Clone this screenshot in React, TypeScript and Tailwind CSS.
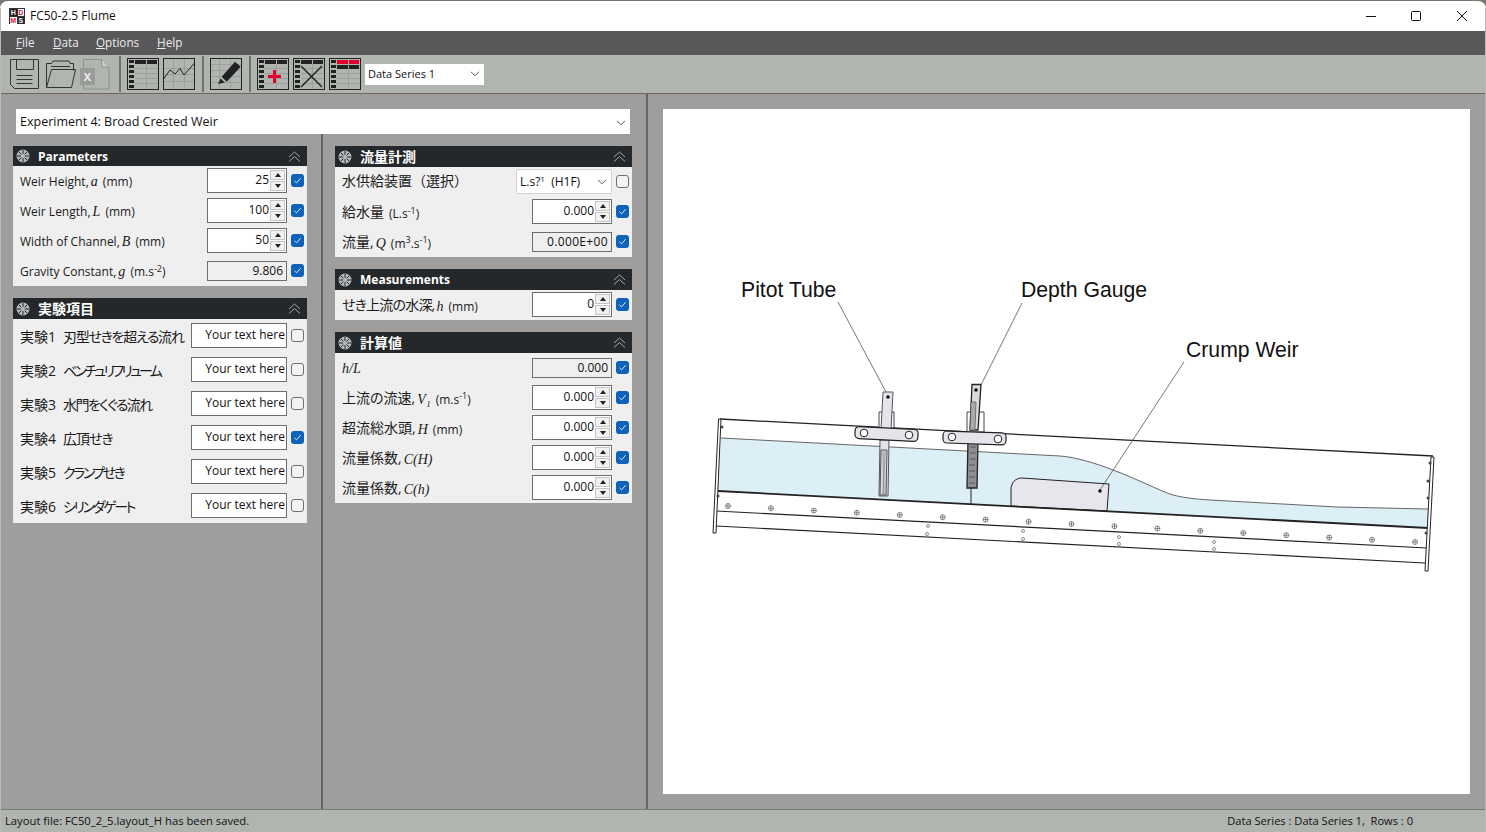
import type { ReactNode } from "react";

const UI = "font-['Open_Sans','Noto_Sans_CJK_JP',sans-serif]";

function Sym({ children }: { children: ReactNode }) {
  return <i className="mx-[2px] font-['Liberation_Serif',serif] text-[14px]">{children}</i>;
}

function Check({ on }: { on?: boolean }) {
  if (!on) {
    return <span className="h-[13px] w-[13px] shrink-0 rounded-[3px] border border-[#6f6f6f] bg-[#f3f3f3]" />;
  }
  return (
    <span className="flex h-[13px] w-[13px] shrink-0 items-center justify-center rounded-[3px] bg-[#0f62b9]">
      <svg width="9" height="9" viewBox="0 0 9 9" fill="none" stroke="#dfeaf6" strokeWidth="1">
        <path d="M1.5 4.8 3.6 6.8 7.6 2.2" />
      </svg>
    </span>
  );
}

function SpinBtns() {
  return (
    <span className="absolute right-[1px] top-[1px] flex h-[21px] w-[15px] flex-col gap-[1px]">
      <span className="flex h-[10px] items-center justify-center border border-[#c4c4c4] bg-[#f1f1f1]">
        <span className="h-0 w-0 border-x-[3px] border-b-[4px] border-x-transparent border-b-[#222]" />
      </span>
      <span className="flex h-[10px] items-center justify-center border border-[#c4c4c4] bg-[#f1f1f1]">
        <span className="h-0 w-0 border-x-[3px] border-t-[4px] border-x-transparent border-t-[#222]" />
      </span>
    </span>
  );
}

function Spin({ value }: { value: string }) {
  return (
    <div className="relative h-[25px] w-[80px] shrink-0 border border-[#6e6e6e] bg-white pr-[17px] text-right text-[12px] leading-[22px] text-[#111]">
      {value}
      <SpinBtns />
    </div>
  );
}

function ReadOnly({ value, wide }: { value: string; wide?: boolean }) {
  return (
    <div className={`h-[20px] w-[80px] shrink-0 border border-[#6e6e6e] bg-[#efefef] pr-[3px] text-right text-[12px] leading-[18px] text-[#111] ${wide ? "tracking-[0.35px]" : ""}`}>
      {value}
    </div>
  );
}

function SnowIcon() {
  return (
    <svg width="14" height="14" viewBox="0 0 14 14" className="shrink-0">
      <circle cx="7" cy="7" r="6.5" fill="#b5b7b8" />
      <g stroke="#24282b" strokeWidth="1">
        <path d="M7 1v12M1 7h12M2.8 2.8l8.4 8.4M11.2 2.8l-8.4 8.4" />
      </g>
      <circle cx="7" cy="7" r="2.2" fill="#b5b7b8" />
    </svg>
  );
}

function PanelHeader({ title, cjk, h }: { title: string; cjk?: boolean; h: string }) {
  return (
    <div className={`flex items-center bg-[#24282b] pl-[3px] pr-[6px] text-white ${h}`}>
      <SnowIcon />
      <span className={`ml-[8px] font-bold ${cjk ? "text-[14px]" : "pt-[1px] text-[12px]"}`}>{title}</span>
      <svg width="13" height="11" viewBox="0 0 13 11" fill="none" stroke="#a9abac" strokeWidth="1" className="ml-auto">
        <path d="M1 6 6.5 1 12 6M1 10.5 6.5 5.5 12 10.5" />
      </svg>
    </div>
  );
}

function Row({ label, control, on, h = "h-[30px]" }: { label: ReactNode; control: ReactNode; on?: boolean; h?: string }) {
  return (
    <div className={`flex items-center pb-[1px] pl-[7px] pr-[3px] ${h}`}>
      <div className="min-w-0 flex-1 whitespace-nowrap pt-[2px] text-[12px] text-[#1a1a1a]">{label}</div>
      {control}
      <span className="ml-[4px] flex">
        <Check on={on} />
      </span>
    </div>
  );
}

function Ja({ children, className = "top-[-1px] [font-feature-settings:'palt']" }: { children: ReactNode; className?: string }) {
  return <span className={`relative text-[14px] ${className}`}>{children}</span>;
}

function TextBox() {
  return (
    <div className="h-[25px] w-[96px] shrink-0 border border-[#6e6e6e] bg-white pr-[1px] text-right text-[12px] leading-[22px] text-[#111]">
      Your text here
    </div>
  );
}

function TableBase({ header = "#222", children, top }: { header?: string; children?: ReactNode; top?: ReactNode }) {
  return (
    <svg width="32" height="32" viewBox="0 0 32 32" className="block shrink-0">
      <rect x="0.5" y="0.5" width="31" height="31" fill="#b0b5b0" stroke="#222" />
      <g stroke="#969a96" strokeWidth="0.8">
        <path d="M8 10.5h23M8 15.5h23M8 20.5h23M8 25.5h23M19.5 6v25" />
      </g>
      <g fill="#222">
        <rect x="2" y="2" width="5" height="3" />
        <rect x="2" y="7" width="5" height="3" />
        <rect x="2" y="12" width="5" height="3" />
        <rect x="2" y="17" width="5" height="3" />
        <rect x="2" y="22" width="5" height="3" />
        <rect x="2" y="27" width="5" height="3" />
      </g>
      <rect x="8" y="2" width="11" height="4" fill={header} />
      <rect x="20" y="2" width="10" height="4" fill={header} />
      {top}
      {children}
    </svg>
  );
}

function Sep() {
  return <span className="block h-[36px] w-[2px] shrink-0 bg-[#6f716f]" />;
}

function Toolbar() {
  return (
    <div className="flex h-[39px] items-center border-b border-[#666] bg-[#b0b5b0] pl-[10px]">
      <svg width="30" height="30" viewBox="0 0 30 30" fill="none" stroke="#333" strokeWidth="1" className="block shrink-0">
        <path d="M.5 .5h28v29H4.500l-4-4z" />
        <path d="M6.500 .5v10h17V.5M6.500 16.500h16M6.500 20.500h16M6.500 24.500h16" />
      </svg>
      <svg width="32" height="30" viewBox="0 0 32 30" fill="none" stroke="#333" strokeWidth="1" className="ml-[5px] block shrink-0">
        <path d="M1.500 28.500V4.500h5l1.500-2.500h16l1 2.500h3.500v7" />
        <path d="M1.500 28.500h25l4-18H6.500L1.500 28.500z" />
        <path d="M6 7.500h19" />
      </svg>
      <svg width="30" height="31" viewBox="0 0 30 31" className="ml-[3px] block shrink-0">
        <path d="M3.500 .5h18l7.500 7.500v22H3.500z" fill="none" stroke="#8c908c" />
        <path d="M21.500 .5V8H29" fill="#c9ccc9" stroke="#8c908c" />
        <rect x="0" y="9" width="15" height="17" fill="#999c99" />
        <text x="7.500" y="22" textAnchor="middle" fontSize="14" fontWeight="700" fill="#e8e8e8" fontFamily="Liberation Sans">x</text>
      </svg>
      <span className="ml-[9px] flex"><Sep /></span>
      <span className="ml-[6px] flex"><TableBase /></span>
      <span className="ml-[4px] flex">
        <svg width="32" height="32" viewBox="0 0 32 32" fill="none" className="block shrink-0">
          <rect x="0.500" y="0.500" width="31" height="31" stroke="#222" />
          <path d="M1 10.500h30M1 16.500h30M1 23.500h30M10.500 1v30M21.500 1v30" stroke="#969a96" strokeWidth="0.8" />
          <path d="M.5 21 7 12l5 4 5-5.500 4 6.500L31.300 5.300" stroke="#222" strokeWidth="1" />
        </svg>
      </span>
      <span className="ml-[7px] flex"><Sep /></span>
      <span className="ml-[6px] flex">
        <svg width="32" height="32" viewBox="0 0 32 32" fill="none" className="block shrink-0">
          <rect x="0.500" y="0.500" width="31" height="31" stroke="#222" />
          <path d="M1 6.500h30M1 12.500h30M1 18.500h30M1 24.500h30M9.500 1v30M20.500 1v30" stroke="#969a96" strokeWidth="0.8" />
          <path d="M11.700 18.700 16.700 23.700 30.700 8.700 25 3.700z" fill="#222" />
          <path d="M10.700 20.500 14.800 24.500 8 26z" fill="#222" />
        </svg>
      </span>
      <span className="ml-[7px] flex"><Sep /></span>
      <span className="ml-[6px] flex">
        <TableBase>
          <path d="M11 18.500h13M17.500 12v13" stroke="#e4002b" strokeWidth="3" />
        </TableBase>
      </span>
      <span className="ml-[4px] flex">
        <TableBase>
          <path d="M8 8 29 29M29 8 8 29" stroke="#222" strokeWidth="1.500" />
        </TableBase>
      </span>
      <span className="ml-[4px] flex">
        <TableBase
          header="#e4002b"
          top={
            <>
              <rect x="8" y="7" width="11" height="4" fill="#222" />
              <rect x="20" y="7" width="10" height="4" fill="#222" />
            </>
          }
        />
      </span>
      <div className="ml-[4px] flex h-[21px] w-[119px] items-center justify-between bg-white pl-[3px] pr-[4px] text-[11px] text-[#111]">
        Data Series 1
        <Chevron />
      </div>
    </div>
  );
}

function Chevron() {
  return (
    <svg width="10" height="6" viewBox="0 0 10 6" fill="none" stroke="#555" strokeWidth="1">
      <path d="M1 .8 5 4.800 9 .8" />
    </svg>
  );
}

function FlumeDrawing() {
  const bolts = Array.from({ length: 17 }, (_, i) => ({ x: 728 + i * 42.94, y: 506 + i * 2.25 }));
  const holes = [
    [928, 526], [927, 534], [1023, 531], [1023, 539], [1119, 537], [1119, 544], [1214, 542], [1214, 549],
  ];
  const studs = [
    [1430, 463], [1428, 481], [1428, 498], [1426, 533], [722, 427], [718, 496],
  ];
  return (
    <svg viewBox="663 109 807 685" width="807" height="685" className="block">
      <path
        d="M721 438 L1060 456 C1075 457 1095 463 1113 470 C1135 478 1160 491 1173 495 C1185 498 1195 499 1210 500 L1337 507 L1428 509 L1428 528 L718 491 Z"
        fill="#dceef6"
      />
      <path d="M721 438 L1060 456 C1075 457 1095 463 1113 470 C1135 478 1160 491 1173 495 C1185 498 1195 499 1210 500 L1337 507 L1428 509" fill="none" stroke="#666" strokeWidth="1" />
      <path d="M1011 506 V490 C1011 483 1015 478 1022 478 L1109 484 L1107 511 Z" fill="#e6e6ec" stroke="#222" strokeWidth="1" />
      <g fill="none" stroke="#222">
        <path d="M720 419 L1433 456" strokeWidth="1.300" />
        <path d="M718 491 L1428 528" strokeWidth="1.800" />
        <path d="M716 511 L1427 548" strokeWidth="1.200" />
        <path d="M716 526 L1425 563" strokeWidth="1.200" />
        <path d="M718.500 419 L713 533 L716 533 L721 419 Z" fill="#fff" strokeWidth="1" />
        <path d="M1431 457 L1425 571 L1428 571 L1434 457 Z" fill="#fff" strokeWidth="1" />
      </g>
      {studs.map(([x, y]) => (
        <circle key={`${x}-${y}`} cx={x} cy={y} r="1.500" fill="#444" />
      ))}
      {bolts.map((b) => (
        <g key={b.x} stroke="#444" strokeWidth="0.6" fill="none">
          <circle cx={b.x} cy={b.y} r="2.500" />
          <path d={`M${b.x - 2.5} ${b.y}h5M${b.x} ${b.y - 2.5}v5`} />
        </g>
      ))}
      {holes.map(([x, y]) => (
        <circle key={`${x}-${y}`} cx={x} cy={y} r="1.500" fill="#fff" stroke="#444" strokeWidth="0.6" />
      ))}
      <g>
        <path d="M879 412 h15 v16 h-15z" fill="#fff" stroke="#444" />
        <path d="M883 392 L893 392 L891 430 L881 430 Z" fill="#e4e4ea" stroke="#555" />
        <circle cx="888" cy="397" r="1.800" fill="#111" />
        <path d="M880 440 h9 l-1 56 h-9z" fill="#e4e4ea" stroke="#555" />
        <path d="M881 450 h6 l-1 45 h-6z" fill="#d4d4da" stroke="#555" />
        <path d="M883 451 l1 44M885 451 l-2 44" stroke="#666" strokeWidth="0.5" />
        <rect x="855" y="428" width="63" height="12" rx="4" transform="rotate(3 887 434)" fill="#e4e4ea" stroke="#222" strokeWidth="1.200" />
        <circle cx="864" cy="433" r="3.800" fill="#fff" stroke="#222" />
        <circle cx="909" cy="435" r="3.800" fill="#fff" stroke="#222" />
      </g>
      <g>
        <path d="M967 412 h17 v20 h-17z" fill="#fff" stroke="#444" />
        <path d="M972 384.500 h9 L978 430 H970 Z" fill="#d9d9df" stroke="#222" strokeWidth="1.300" />
        <circle cx="976" cy="390" r="1.800" fill="#111" />
        <path d="M971 402 h5 l-1 28 h-5z" fill="#aaa" stroke="#444" strokeWidth="0.6" />
        <path d="M968 440 h10 l-1 48 h-10z" fill="#8f8f93" stroke="#222" strokeWidth="1.300" />
        <path d="M970 447h6M970 453h6M970 459h6M969 465h6M969 471h6M969 477h6M969 483h6" stroke="#333" strokeWidth="0.6" />
        <path d="M971 488 V505" stroke="#222" />
        <rect x="943" y="432" width="63" height="12" rx="4" transform="rotate(2 975 438)" fill="#e4e4ea" stroke="#222" strokeWidth="1.200" />
        <circle cx="952" cy="437" r="3.800" fill="#fff" stroke="#222" />
        <circle cx="998" cy="439" r="3.800" fill="#fff" stroke="#222" />
      </g>
      <g stroke="#555" strokeWidth="0.8" fill="none">
        <path d="M838 302 L886 392" />
        <path d="M1022 303 L981 385" />
        <path d="M1184 362 L1100 490" />
      </g>
      <circle cx="1100" cy="491" r="1.800" fill="#111" />
      <g fontFamily="Liberation Sans, sans-serif" fontSize="21.200" fill="#111">
        <text x="741" y="297">Pitot Tube</text>
        <text x="1021" y="297">Depth Gauge</text>
        <text x="1186" y="356.500">Crump Weir</text>
      </g>
    </svg>
  );
}

// tracking per row: the reference's kana run much narrower than Noto's
const experiments = [
  ["実験1", "刃型せきを超える流れ", false, "tracking-[-1.3px]"],
  ["実験2", "ベンチュリフリューム", false, "tracking-[-2.7px]"],
  ["実験3", "水門をくぐる流れ", false, "tracking-[-1.6px]"],
  ["実験4", "広頂せき", true, "tracking-[-1px]"],
  ["実験5", "クランプせき", false, "tracking-[-2.5px]"],
  ["実験6", "シリンダゲート", false, "tracking-[-2.4px]"],
] as const;

export default function App() {
  return (
    <div className={`relative h-[832px] w-[1486px] overflow-hidden bg-[#77766f] pt-[1px] ${UI}`}>
      <div className="flex h-[831px] flex-col overflow-hidden rounded-t-[8px] bg-[#a09e9c]">
        {/* title bar */}
        <div className="flex h-[30px] shrink-0 items-center bg-white pl-[9px]">
          <div className="grid h-[16px] w-[16px] grid-cols-2 gap-[1px] bg-[#333] p-[1px] text-center font-['Liberation_Sans',sans-serif] text-[7px] font-bold leading-[7px]">
            <span className="bg-[#222] text-white">H</span>
            <span className="bg-white text-[#d8113a]">D</span>
            <span className="bg-white text-[#d8113a]">M</span>
            <span className="bg-[#222] text-white">S</span>
          </div>
          <span className="ml-[5px] text-[12px] text-[#111]">FC50-2.5 Flume</span>
          <div className="ml-auto flex items-center pr-[18px]">
            <svg width="12" height="12" viewBox="0 0 12 12" stroke="#111" fill="none">
              <path d="M1 6.500h10" />
            </svg>
            <svg width="12" height="12" viewBox="0 0 12 12" stroke="#111" fill="none" className="ml-[33px]">
              <rect x="1.500" y="1.500" width="9" height="9" rx="1" />
            </svg>
            <svg width="12" height="12" viewBox="0 0 12 12" stroke="#111" fill="none" className="ml-[34px]">
              <path d="M1 1 11 11M11 1 1 11" />
            </svg>
          </div>
        </div>
        {/* menu */}
        <div className="flex h-[24px] shrink-0 items-center bg-[#58585a] pl-[16px] text-[11.700px] text-[#ececec]">
          <span className="w-[37px]"><u>F</u>ile</span>
          <span className="w-[43px]"><u>D</u>ata</span>
          <span className="w-[61px]"><u>O</u>ptions</span>
          <span><u>H</u>elp</span>
        </div>
        <Toolbar />
        {/* main */}
        <div className="flex min-h-0 flex-1">
          <div className="flex w-[646px] shrink-0 flex-col pt-[15px]">
            <div className="mx-[16px] flex h-[25px] shrink-0 items-center justify-between bg-white pl-[4px] pr-[4px] pt-[2px] text-[12.500px] text-[#111]">
              Experiment 4: Broad Crested Weir
              <Chevron />
            </div>
            <div className="flex min-h-0 flex-1">
              <div className="w-[321px] shrink-0 pl-[13px] pr-[14px] pt-[12px]">
                <section>
                  <PanelHeader title="Parameters" h="h-[20px]" />
                  <div className="bg-[#efefef]">
                    <Row label={<>Weir Height,<Sym>a</Sym> (mm)</>} on control={<Spin value="25" />} />
                    <Row label={<>Weir Length,<Sym>L</Sym> (mm)</>} on control={<Spin value="100" />} />
                    <Row label={<>Width of Channel,<Sym>B</Sym> (mm)</>} on control={<Spin value="50" />} />
                    <Row label={<>Gravity Constant,<Sym>g</Sym> (m.s<sup>-2</sup>)</>} on control={<ReadOnly value="9.806" />} />
                  </div>
                </section>
                <section className="mt-[12px]">
                  <PanelHeader title="実験項目" cjk h="h-[21px]" />
                  <div className="bg-[#efefef]">
                    {experiments.map(([no, name, on, track]) => (
                      <Row
                        key={no}
                        h="h-[34px]"
                        on={on}
                        label={
                          <Ja className="top-0 [font-feature-settings:'palt']">
                            {no}
                            <span className={`ml-[7px] ${track}`}>{name}</span>
                          </Ja>
                        }
                        control={<TextBox />}
                      />
                    ))}
                  </div>
                </section>
              </div>
              <div className="w-[2px] shrink-0 bg-[#666]" />
              <div className="flex-1 pl-[12px] pr-[14px] pt-[12px]">
                <section>
                  <PanelHeader title="流量計測" cjk h="h-[21px]" />
                  <div className="bg-[#efefef]">
                    <Row
                      label={<Ja className="top-[-2px]">水供給装置（選択）</Ja>}
                      control={
                        <div className="flex h-[25px] w-[96px] shrink-0 items-center justify-between rounded-[2px] border border-[#d0d0d0] bg-white pl-[3px] pr-[4px] pt-[1px] text-[12px] text-[#111]">
                          <span>L.s?<sup className="text-[8px]">1</sup>&nbsp; (H1F)</span>
                          <Chevron />
                        </div>
                      }
                    />
                    <Row label={<><Ja>給水量</Ja><span className="ml-[5px]">(L.s<sup>-1</sup>)</span></>} on control={<Spin value="0.000" />} />
                    <Row label={<><Ja>流量,</Ja><Sym>Q</Sym> (m<sup>3</sup>.s<sup>-1</sup>)</>} on control={<ReadOnly value="0.000E+00" wide />} />
                  </div>
                </section>
                <section className="mt-[12px]">
                  <PanelHeader title="Measurements" h="h-[21px]" />
                  <div className="bg-[#efefef]">
                    <Row label={<><Ja className="top-[-1px] tracking-[-0.8px] [font-feature-settings:'palt']">せき上流の水深,</Ja><Sym>h</Sym> (mm)</>} on control={<Spin value="0" />} />
                  </div>
                </section>
                <section className="mt-[12px]">
                  <PanelHeader title="計算値" cjk h="h-[21px]" />
                  <div className="bg-[#efefef]">
                    <Row label={<i className="font-['Liberation_Serif',serif] text-[14px]">h/L</i>} on control={<ReadOnly value="0.000" />} />
                    <Row label={<><Ja>上流の流速,</Ja><Sym>V₁</Sym> (m.s<sup>-1</sup>)</>} on control={<Spin value="0.000" />} />
                    <Row label={<><Ja>超流総水頭,</Ja><Sym>H</Sym> (mm)</>} on control={<Spin value="0.000" />} />
                    <Row label={<><Ja>流量係数,</Ja><Sym>C(H)</Sym></>} on control={<Spin value="0.000" />} />
                    <Row label={<><Ja>流量係数,</Ja><Sym>C(h)</Sym></>} on control={<Spin value="0.000" />} />
                  </div>
                </section>
              </div>
            </div>
          </div>
          <div className="w-[2px] shrink-0 bg-[#666]" />
          <div className="flex-1 pb-[15px] pl-[15px] pr-[16px] pt-[15px]">
            <div className="h-full bg-white">
              <FlumeDrawing />
            </div>
          </div>
        </div>
        {/* status */}
        <div className="flex h-[23px] shrink-0 items-center justify-between border-t border-[#777] bg-[#b0b5b0] pl-[5px] pr-[73px] text-[11.100px] text-[#111]">
          <span className="text-[11.250px]">Layout file: FC50_2_5.layout_H has been saved.</span>
          <span>Data Series : Data Series 1,&nbsp; Rows : 0</span>
        </div>
      </div>
      {/* window edge */}
      <span className="absolute bottom-0 left-0 top-[8px] w-px bg-[#b9b9b9]" />
      <span className="absolute bottom-0 right-0 top-[8px] w-px bg-[#b9b9b9]" />
    </div>
  );
}
